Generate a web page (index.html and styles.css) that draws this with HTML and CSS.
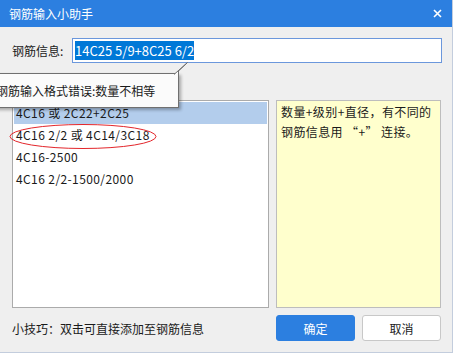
FILE: index.html
```html
<!DOCTYPE html>
<html lang="zh-CN">
<head>
    <meta charset="UTF-8">
    <title>钢筋输入小助手</title>
    <link rel="stylesheet" href="styles.css">
</head>
<body>
    <div class="dialog">
        <div class="titlebar">
            <span class="title">钢筋输入小助手</span>
            <span class="close">
                <svg width="9" height="9" viewBox="0 0 9 9"><path d="M1 1L8 8M8 1L1 8" stroke="#fff" stroke-width="1.6"/></svg>
            </span>
        </div>

        <div class="content">
            <div class="field-row">
                <label>钢筋信息:</label>
                <div class="input"><span class="selected">14C25 5/9+8C25 6/2</span></div>
            </div>

            <div class="panels">
                <ul class="code-list">
                    <li class="active">4C16 或 2C22+2C25</li>
                    <li>4C16 2/2 或 4C14/3C18</li>
                    <li>4C16-2500</li>
                    <li>4C16 2/2-1500/2000</li>
                </ul>
                <div class="hint">数量+级别+直径，有不同的钢筋信息用 “+” 连接。</div>
            </div>

            <div class="footer">
                <span class="tip">小技巧：双击可直接添加至钢筋信息</span>
                <button class="btn btn-ok">确定</button>
                <button class="btn btn-cancel">取消</button>
            </div>

            <!-- 错误提示气泡 -->
            <div class="tooltip">
                钢筋输入格式错误:数量不相等
                <svg class="tail" width="16" height="14" viewBox="0 0 16 14"><path d="M0 13.5L13.5 1.5L4.5 10V14" fill="#fbfbfb" stroke="#707070" stroke-width="1"/></svg>
            </div>

            <!-- 红色圈注 -->
            <svg class="mark" width="152" height="30" viewBox="0 0 152 30"><ellipse cx="76" cy="14.5" rx="73" ry="12" fill="none" stroke="#e3262b" stroke-width="1"/></svg>
        </div>
    </div>
</body>
</html>
```

FILE: styles.css
```css
body {
    margin: 0;
    font-family: "Noto Sans CJK SC", "Noto Sans", sans-serif;
    font-size: 12px;
    color: #1a1a1a;
}

.dialog {
    width: 452px;
    height: 352px;
    background-color: #efefef;
    border-right: 1px solid #c3cddd;
    border-bottom: 1px solid #c3cddd;
    display: flex;
    flex-direction: column;
    overflow: hidden;
}

.titlebar {
    height: 27px;
    background-color: #2c7fe0;
    color: #fff;
    display: flex;
    align-items: center;
    padding: 0 9px;
    flex-shrink: 0;
}

.title {
    flex: 1;
}

.close {
    display: flex;
    margin-right: 1px;
}

.content {
    position: relative;
    flex: 1;
    padding: 11px 11px 0 12px;
    display: flex;
    flex-direction: column;
}

.field-row {
    display: flex;
    align-items: center;
    height: 25px;
    margin-right: -1px;
}

.field-row label {
    width: 60px;
}

.input {
    flex: 1;
    height: 25px;
    box-sizing: border-box;
    border: 1px solid #6b97dc;
    background-color: #fff;
    display: flex;
    align-items: center;
    padding-left: 2px;
    font-size: 13px;
}

.selected {
    background-color: #0078d7;
    color: #fff;
    line-height: 19px;
}

.panels {
    display: flex;
    gap: 7px;
    margin-top: 37px;
    height: 208px;
}

.code-list {
    width: 257px;
    box-sizing: border-box;
    margin: 0;
    padding: 1px;
    list-style: none;
    background-color: #fff;
    border: 1px solid #ababab;
    letter-spacing: 0.4px;
}

.code-list li {
    height: 22px;
    line-height: 21px;
    padding-left: 2px;
}

.code-list li.active {
    background-color: #b3cdec;
}

.hint {
    flex: 1;
    box-sizing: border-box;
    background-color: #ffffcd;
    border: 1px solid #bdbdbd;
    padding: 1px 6px 0 4px;
    line-height: 20px;
    letter-spacing: 0.4px;
}

.footer {
    display: flex;
    align-items: center;
    gap: 7px;
    padding-top: 7px;
}

.tip {
    flex: 1;
}

.btn {
    width: 79px;
    height: 26px;
    border-radius: 3px;
    font-family: inherit;
    font-size: 12px;
    cursor: pointer;
}

.btn-ok {
    background-color: #2c7fe0;
    border: 1px solid #2c7fe0;
    color: #fff;
}

.btn-cancel {
    background-color: #fff;
    border: 1px solid #c8c8c8;
    color: #1a1a1a;
}

.tooltip {
    position: absolute;
    left: -6px;
    top: 46px;
    width: 185px;
    height: 35px;
    box-sizing: border-box;
    background-color: #fbfbfb;
    border: 1px solid #707070;
    box-shadow: 2px 2px 3px rgba(0, 0, 0, 0.3);
    padding-left: 1px;
    line-height: 33px;
    white-space: nowrap;
}

.tail {
    position: absolute;
    right: -12px;
    top: -13px;
}

.mark {
    position: absolute;
    left: 7px;
    top: 95px;
}
```
